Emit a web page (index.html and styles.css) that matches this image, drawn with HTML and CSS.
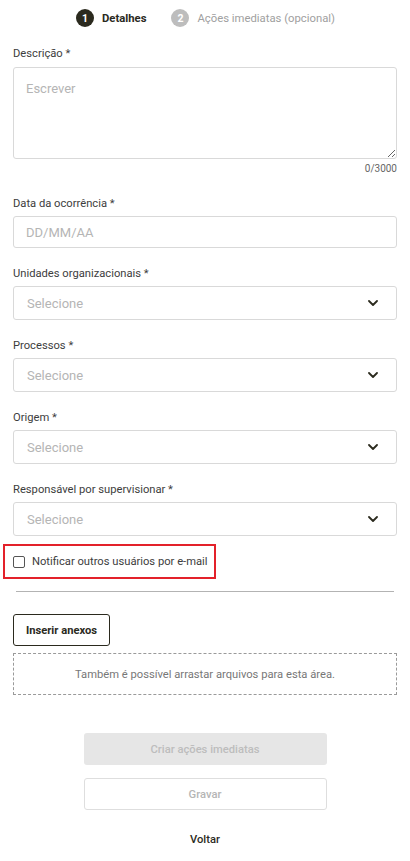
FILE: index.html
```html
<!DOCTYPE html>
<html lang="pt">
<head>
<meta charset="utf-8">
<title>Detalhes</title>
<link rel="stylesheet" href="styles.css">
</head>
<body>
<div class="page">
  <nav class="stepper">
    <div class="step active"><span class="step-num">1</span><span class="step-label">Detalhes</span></div>
    <div class="step"><span class="step-num">2</span><span class="step-label">Ações imediatas (opcional)</span></div>
  </nav>

  <div class="field first">
    <label class="label">Descrição *</label>
    <textarea class="textarea" placeholder="Escrever"></textarea>
    <div class="counter">0/3000</div>
  </div>

  <div class="field date">
    <label class="label">Data da ocorrência *</label>
    <input class="input" type="text" placeholder="DD/MM/AA">
  </div>

  <div class="field">
    <label class="label">Unidades organizacionais *</label>
    <div class="select"><span>Selecione</span><svg class="chev" viewBox="0 0 10 6" width="10" height="6"><path d="M1 1l4 4 4-4" fill="none" stroke="#2b2a1e" stroke-width="1.8" stroke-linecap="round" stroke-linejoin="round"/></svg></div>
  </div>

  <div class="field">
    <label class="label">Processos *</label>
    <div class="select"><span>Selecione</span><svg class="chev" viewBox="0 0 10 6" width="10" height="6"><path d="M1 1l4 4 4-4" fill="none" stroke="#2b2a1e" stroke-width="1.8" stroke-linecap="round" stroke-linejoin="round"/></svg></div>
  </div>

  <div class="field">
    <label class="label">Origem *</label>
    <div class="select"><span>Selecione</span><svg class="chev" viewBox="0 0 10 6" width="10" height="6"><path d="M1 1l4 4 4-4" fill="none" stroke="#2b2a1e" stroke-width="1.8" stroke-linecap="round" stroke-linejoin="round"/></svg></div>
  </div>

  <div class="field">
    <label class="label">Responsável por supervisionar *</label>
    <div class="select"><span>Selecione</span><svg class="chev" viewBox="0 0 10 6" width="10" height="6"><path d="M1 1l4 4 4-4" fill="none" stroke="#2b2a1e" stroke-width="1.8" stroke-linecap="round" stroke-linejoin="round"/></svg></div>
  </div>

  <div class="notify">
    <span class="checkbox"></span>
    <span class="notify-text">Notificar outros usuários por e-mail</span>
  </div>

  <hr class="divider">

  <button class="btn-attach">Inserir anexos</button>
  <div class="dropzone">Também é possível arrastar arquivos para esta área.</div>

  <div class="actions">
    <button class="btn-primary" disabled>Criar ações imediatas</button>
    <button class="btn-secondary" disabled>Gravar</button>
    <button class="btn-link">Voltar</button>
  </div>
</div>
</body>
</html>
```

FILE: styles.css
```css
* { box-sizing: border-box; }
html, body { margin: 0; padding: 0; background: #fff; }
body {
  font-family: Roboto, "Liberation Sans", Arial, sans-serif;
  color: #333;
  font-size: 11.2px;
}
.page {
  padding: 0 13px 0 13px;
  display: flex;
  flex-direction: column;
}
.stepper {
  height: 36px;
  display: flex;
  justify-content: center;
  align-items: center;
  gap: 25px;
  padding-left: 1px;
}
.step {
  display: flex;
  align-items: center;
  gap: 8px;
  color: #a0a0a0;
  font-size: 11.3px;
}
.step-num {
  width: 18px;
  height: 18px;
  border-radius: 50%;
  background: #bdbdbd;
  color: #fff;
  font-size: 10.5px;
  font-weight: 700;
  display: flex;
  align-items: center;
  justify-content: center;
}
.step.active { color: #2b2a1e; font-weight: 700; }
.step.active .step-num { background: #2b2a1e; }

.field {
  display: flex;
  flex-direction: column;
  margin-top: 18px;
}
.field.first { margin-top: 10px; }
.field.date { margin-top: 20px; }
.label {
  line-height: 16px;
  font-size: 11.2px;
  color: #3d3d3d;
  margin-bottom: 4px;
}
.field.first .label { margin-bottom: 5px; }
.textarea {
  height: 92px;
  border: 1px solid #d9d9d9;
  border-radius: 3px;
  padding: 13px 12px;
  font-family: inherit;
  font-size: 13px;
  color: #333;
  resize: vertical;
  outline: none;
  display: block;
}
.textarea::placeholder, .input::placeholder { color: #b5b5b5; }
.counter {
  text-align: right;
  font-size: 10px;
  line-height: 14px;
  color: #666;
  margin-top: 3px;
}
.input {
  height: 32px;
  border: 1px solid #d9d9d9;
  border-radius: 3px;
  padding: 0 12px;
  font-family: inherit;
  font-size: 13px;
  outline: none;
}
.select {
  height: 34px;
  border: 1px solid #d9d9d9;
  border-radius: 3px;
  padding: 0 18px 0 13px;
  display: flex;
  align-items: center;
  justify-content: space-between;
  font-size: 13px;
  color: #b5b5b5;
}
.chev { display: block; }

.notify {
  margin: 8px 0 0 -10px;
  width: 213px;
  height: 35px;
  border: 2px solid #e3212a;
  display: flex;
  align-items: center;
  gap: 7px;
  padding-left: 8px;
  white-space: nowrap;
}
.checkbox {
  flex: none;
  width: 12px;
  height: 12px;
  border: 1px solid #555;
  border-radius: 2px;
  background: #fff;
}
.notify-text { font-size: 11.2px; color: #3d3d3d; }

.divider {
  margin: 12px 3px 0 3px;
  border: 0;
  border-top: 1px solid #b3b3b3;
  height: 0;
}
.btn-attach {
  align-self: flex-start;
  margin-top: 22px;
  height: 32px;
  width: 97px;
  border: 1px solid #2b2a1e;
  border-radius: 3px;
  background: #fff;
  font-family: inherit;
  font-size: 11.2px;
  font-weight: 700;
  color: #2b2a1e;
  padding: 0;
}
.dropzone {
  margin-top: 7px;
  height: 42px;
  border: 1px dashed #9a9a9a;
  display: flex;
  align-items: center;
  justify-content: center;
  font-size: 11.2px;
  color: #777;
}
.actions {
  margin-top: 38px;
  display: flex;
  flex-direction: column;
  align-items: center;
}
.btn-primary, .btn-secondary {
  width: 243px;
  height: 32px;
  border-radius: 3px;
  font-family: inherit;
  font-size: 11.2px;
  font-weight: 500;
  padding: 0;
}
.btn-primary {
  background: #e6e6e6;
  border: 0;
  color: #bdbdbd;
}
.btn-secondary {
  margin-top: 13px;
  background: #fff;
  border: 1px solid #dedede;
  color: #b5b5b5;
}
.btn-link {
  margin-top: 19px;
  background: none;
  border: 0;
  font-family: inherit;
  font-size: 11.2px;
  font-weight: 500;
  color: #2b2a1e;
  padding: 0;
  height: 20px;
}
```
